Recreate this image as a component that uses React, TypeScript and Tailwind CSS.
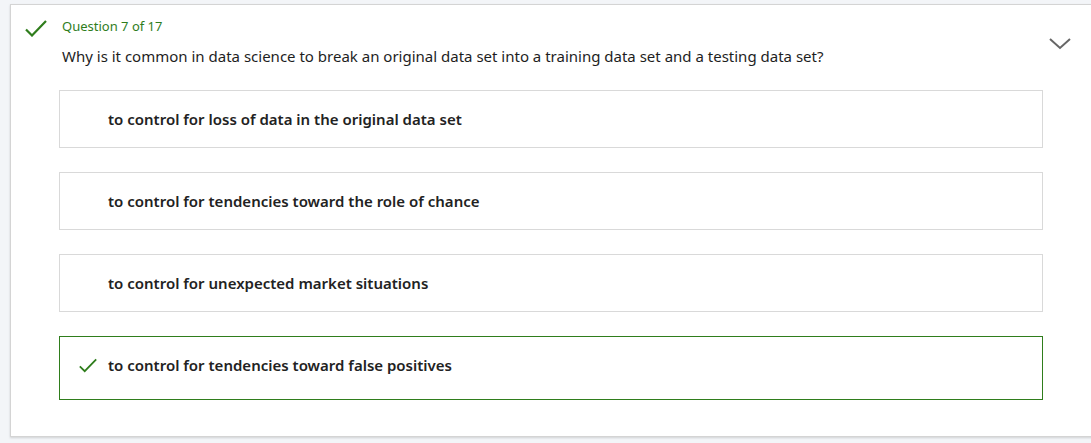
const options = [
	{ id: 1, text: "to control for loss of data in the original data set", correct: false },
	{ id: 2, text: "to control for tendencies toward the role of chance", correct: false },
	{ id: 3, text: "to control for unexpected market situations", correct: false },
	{ id: 4, text: "to control for tendencies toward false positives", correct: true },
];

function Tick({ className }: { className?: string }) {
	return (
		<svg className={className} viewBox="0 0 22 17" fill="none">
			<path d="M1 9.5 L7 15.5 L21 1" stroke="#2f7d1c" strokeWidth="2.2" />
		</svg>
	);
}

export default function App() {
	return (
		<div
			className="w-[1091px] h-[443px] overflow-hidden bg-[#f3f5f8] pt-[4px] pl-[10px]"
			style={{ fontFamily: '"Noto Sans", "Open Sans", sans-serif' }}
		>
			<div className="relative w-[1100px] h-[433px] bg-white border border-[#d4d4d4] shadow-[0_1px_2px_rgba(0,0,0,0.15)]">
				<div className="flex pt-[12px] pl-[14px]">
					<Tick className="w-[22px] h-[17px] mt-[3px]" />
					<div className="ml-[15px]">
						<div className="text-[13px] leading-[18px] text-[#2f7d1c]">Question 7 of 17</div>
						<div className="mt-[10px] text-[15px] leading-[22px] text-[#1e1e1e]">
							Why is it common in data science to break an original data set into a training data set and a testing data set?
						</div>
					</div>
				</div>
				<svg
					className="absolute left-[1037px] top-[32px]"
					width="24"
					height="14"
					viewBox="0 0 24 14"
					fill="none"
				>
					<path d="M2 2 L12 11 L22 2" stroke="#666" strokeWidth="2" />
				</svg>
				<div className="flex flex-col gap-[24px] ml-[48px] mt-[23px] w-[984px]">
					{options.map((o) =>
						o.correct ? (
							<div
								key={o.id}
								className="flex items-center h-[64px] border border-[#2f7d1c] pl-[19px] pb-[6px]"
							>
								<Tick className="w-[18px] h-[15px]" />
								<span className="ml-[11px] text-[15px] font-semibold text-[#222]">{o.text}</span>
							</div>
						) : (
							<div
								key={o.id}
								className="flex items-center h-[58px] border border-[#d9d9d9] pl-[48px]"
							>
								<span className="text-[15px] font-semibold text-[#222]">{o.text}</span>
							</div>
						),
					)}
				</div>
			</div>
		</div>
	);
}
